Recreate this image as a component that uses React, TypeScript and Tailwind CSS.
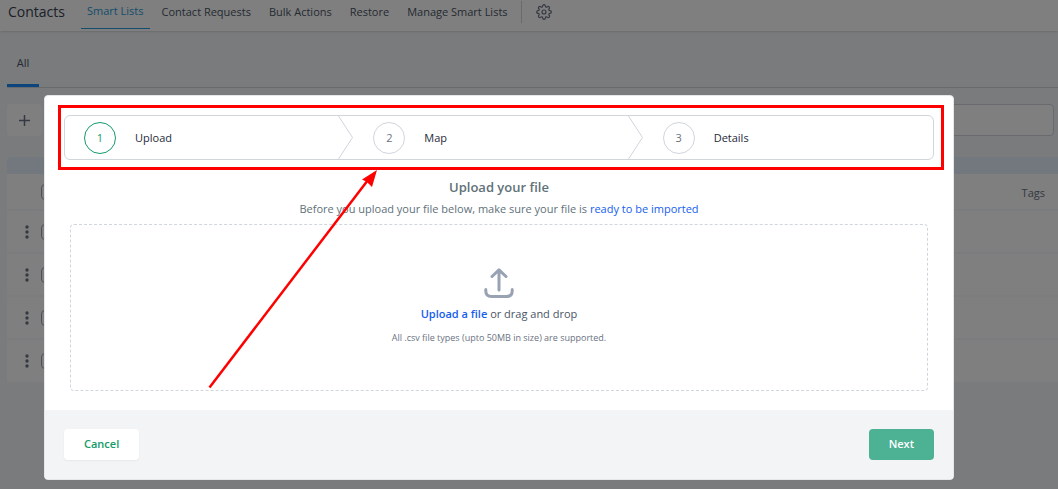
import React from 'react';
import { FiSettings } from 'react-icons/fi';

interface Step {
  number: number;
  label: string;
  active: boolean;
}

const links: string[] = ['Contact Requests', 'Bulk Actions', 'Restore', 'Manage Smart Lists'];

const steps: Step[] = [
  { number: 1, label: 'Upload', active: true },
  { number: 2, label: 'Map', active: false },
  { number: 3, label: 'Details', active: false },
];

const rows = [1, 2, 3, 4];

const Header = () => {
  return (
    <header className="relative flex h-[31px] items-start bg-white pl-2 shadow">
      <h1 className="w-[73px] text-[14px] leading-6 font-medium text-gray-700">Contacts</h1>
      <nav className="flex items-start whitespace-nowrap text-[11px] leading-6 font-medium text-gray-600">
        <a href="#" className="h-[29px] border-b border-[#2a9bd8] px-[6px] leading-[22px] text-[#2a9bd8]">
          Smart Lists
        </a>
        <div className="ml-3 flex gap-[18px]">
          {links.map((link) => (
            <a key={link} href="#">
              {link}
            </a>
          ))}
        </div>
      </nav>
      <div className="mt-px ml-[13px] h-[22px] w-px bg-gray-300" />
      <button type="button" aria-label="Settings" className="ml-[14px] pt-[4px] text-gray-500">
        <FiSettings size={16} strokeWidth={1.8} />
      </button>
    </header>
  );
};

const ContactsPage = () => {
  return (
    <div className="min-h-screen bg-[#f4f6f9]">
      <Header />
      <div className="pl-[7px]">
        <div className="flex h-[57px] items-end border-b border-gray-300">
          <a
            href="#"
            className="flex h-[56px] w-8 justify-center border-b-3 border-[#188bf6] pt-[20px] text-[11px] leading-6 text-gray-600"
          >
            All
          </a>
        </div>
        <div className="flex justify-between pt-4 pr-1">
          <button
            type="button"
            aria-label="Add smart list"
            className="flex h-8 w-[35px] items-center justify-center rounded bg-white text-gray-500"
          >
            <svg width="11" height="11" viewBox="0 0 11 11" stroke="currentColor" strokeWidth="1.5">
              <path d="M5.5 0v11M0 5.5h11" />
            </svg>
          </button>
          <input
            type="text"
            aria-label="Search contacts"
            className="h-8 w-60 rounded border border-gray-300 bg-white px-2 text-[11px]"
          />
        </div>
        <div className="mt-[21px] h-[17px] rounded-tl bg-[#e6f0ff]" />
        <table className="w-full border-collapse bg-white text-[11px] text-gray-500">
          <thead>
            <tr className="h-9 border-b-2 border-[#f7f8fb]">
              <th className="w-[34px]" />
              <th className="text-left">
                <input
                  type="checkbox"
                  aria-label="Select all"
                  className="block size-4 appearance-none rounded border border-gray-400"
                />
              </th>
              <th className="pt-1 pr-[13px] text-right font-medium">Tags</th>
            </tr>
          </thead>
          <tbody>
            {rows.map((row) => (
              <tr key={row} className="h-[43px] border-b-2 border-[#f7f8fb] last:border-0">
                <td className="pl-[18px] text-gray-500">
                  <svg width="4" height="14" viewBox="0 0 4 14" fill="currentColor">
                    <circle cx="2" cy="2" r="1.7" />
                    <circle cx="2" cy="7" r="1.7" />
                    <circle cx="2" cy="12" r="1.7" />
                  </svg>
                </td>
                <td>
                  <input
                    type="checkbox"
                    aria-label={`Select contact ${row}`}
                    className="block size-4 appearance-none rounded border border-gray-400"
                  />
                </td>
                <td />
              </tr>
            ))}
          </tbody>
        </table>
      </div>
    </div>
  );
};

const Stepper = () => {
  return (
    <div className="relative">
      <ol className="grid grid-cols-3 rounded-md border border-gray-300">
        {steps.map((step, index) => (
          <li key={step.number} className="relative flex h-[43px] items-center gap-[19px] pl-[19px]">
            <span
              className={
                step.active
                  ? 'flex size-8 items-center justify-center rounded-full border border-[#149a6b] pt-px text-[11px] font-medium text-[#149a6b]'
                  : 'flex size-8 items-center justify-center rounded-full border border-gray-300 pt-px text-[11px] font-medium text-gray-500'
              }
            >
              {step.number}
            </span>
            <span className="pt-px text-[11px] font-medium text-gray-800">{step.label}</span>
            {index < steps.length - 1 && (
              <svg
                className="absolute top-0 right-0 h-full w-4 text-gray-300"
                viewBox="0 0 16 43"
                fill="none"
                stroke="currentColor"
              >
                <path d="M0.5 0L14.5 21.5L0.5 43" />
              </svg>
            )}
          </li>
        ))}
      </ol>
      <div className="pointer-events-none absolute -top-[10px] -right-[10px] -bottom-[10px] -left-[6px] border-3 border-[#ff0000]" />
    </div>
  );
};

const UploadModal = () => {
  return (
    <div className="fixed inset-0 bg-black/50 pt-[95px] pr-[104px] pl-11">
      <div
        role="dialog"
        aria-label="Upload your file"
        className="relative rounded border border-gray-200 bg-white"
      >
        <div className="px-[19px] pt-[19px]">
          <Stepper />
        </div>
        <div className="px-[25px] pt-[17px] pb-[19px] text-center text-[11px] text-[#607179]">
          <h2 className="text-[13px] leading-5 font-semibold">Upload your file</h2>
          <p className="pb-[3px] leading-6">
            Before you upload your file below, make sure your file is{' '}
            <a href="#" className="text-[#155eef]">
              ready to be imported
            </a>
          </p>
          <div className="flex h-[167px] flex-col items-center rounded border border-dashed border-gray-300 pt-[43px]">
            <svg
              width="30"
              height="30"
              viewBox="0 0 30 30"
              fill="none"
              stroke="#98a2b3"
              strokeWidth="3"
              strokeLinecap="round"
              strokeLinejoin="round"
            >
              <path d="M15 22V2M8 8.5L15 1.8L22 8.5" />
              <path d="M1.8 21.5V23Q1.8 28.5 7.5 28.5H22.5Q28.2 28.5 28.2 23V21.5" />
            </svg>
            <p className="pt-[6px] leading-5 text-gray-600">
              <a href="#" className="font-semibold text-[#155eef]">
                Upload a file
              </a>{' '}
              or drag and drop
            </p>
            <p className="pt-1 text-[9px] leading-5 text-gray-500">
              All .csv file types (upto 50MB in size) are supported.
            </p>
          </div>
        </div>
        <div className="flex justify-between rounded-b bg-[#f2f4f5] px-[19px] py-[19px] text-[11px] font-semibold">
          <button type="button" className="h-[31px] rounded bg-white px-5 text-[#149a6b] shadow-xs">
            Cancel
          </button>
          <button type="button" className="h-[31px] rounded bg-[#4db194] px-5 text-white">
            Next
          </button>
        </div>
        <svg className="absolute top-[74px] left-[163px]" width="170" height="220" viewBox="0 0 170 220">
          <path d="M1.5 217.5L160 10" stroke="#ff0000" strokeWidth="2.5" />
          <path d="M169 0L154 9.5L159 12L164 17Z" fill="#ff0000" />
        </svg>
      </div>
    </div>
  );
};

const App = () => {
  return (
    <div className="font-['Open_Sans',sans-serif]">
      <ContactsPage />
      <UploadModal />
    </div>
  );
};

export default App;
